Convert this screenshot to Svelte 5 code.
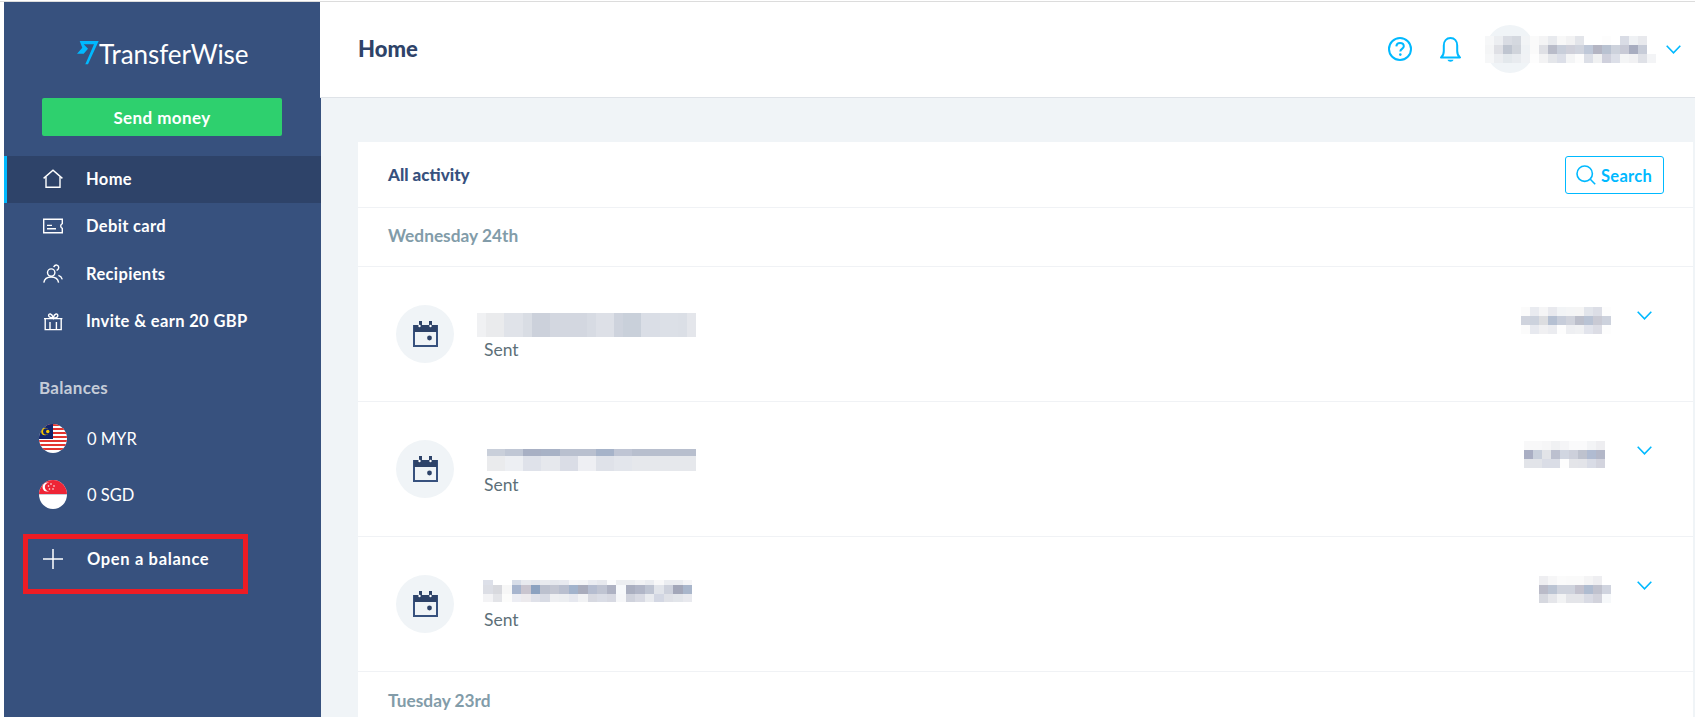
<script lang="ts">
  type PixRow = { h: number; cells: string[] };
  type Activity = { name: PixRow[]; nameW: number; nameTop: number; nameLeft: number; amount: PixRow[]; amountTop: number; amountRight: number; chevTop: number };

  const nav = [
    { label: 'Home', icon: 'home', active: true },
    { label: 'Debit card', icon: 'card', active: false },
    { label: 'Recipients', icon: 'people', active: false },
    { label: 'Invite & earn 20 GBP', icon: 'gift', active: false },
  ];

  // the blurred-out names and amounts, as cell colours
  const userPix: PixRow[] = [
    { h: 9, cells: ['f6f7f8', 'eceef1', 'd9dce3', 'd4d8df', 'f2f4f6', 'fafafa', 'f4f4f5', 'e8eaee', 'f8f8f8', 'f2f2f3', 'e3e5ea', 'ffffff', 'ffffff', 'fdfdfd', 'ffffff', 'd9dce5', 'eff1f4', 'e8e9ed', 'ffffff'] },
    { h: 9, cells: ['f4f5f6', 'dfe0e5', 'bfc5d0', 'd0d4db', 'eff2f5', 'fafafa', 'dfe0e5', 'b9bcc9', 'c8ceda', 'cfd0da', 'd0d4de', 'bfc8d8', 'b4b5c3', 'b9c2d1', 'cdd2dc', 'c8cad6', 'a8adc0', 'c7ccd8', 'ffffff'] },
    { h: 9, cells: ['f6f7f8', 'eceef1', 'e3e8ec', 'e8ebef', 'f0f2f5', 'fdfdfd', 'f3f3f4', 'e4e6ea', 'dcdfe8', 'f4f5f6', 'fcfcfc', 'dcdfe7', 'f0f1f2', 'cfd0dc', 'dcdfe8', 'f4f5f6', 'f1f1f3', 'dfe1e7', 'f3f4f6'] },
  ];

  const activities: Activity[] = [
    {
      name: [{ h: 24, cells: ['f0f1f3', 'eaebed', 'eaebed', 'e0e3e9', 'e0e3e9', 'd9dde4', 'ccd1db', 'ccd1db', 'd3d7e0', 'd3d7e0', 'd3d7e0', 'd3d7e0', 'd7dbe3', 'dde0e7', 'dde0e7', 'ced3dd', 'c9d0da', 'c9d0da', 'dadee6', 'dadee6', 'dce0e7', 'dce0e7', 'dbdfe6', 'e4e6eb'] }],
      nameW: 9.125, nameTop: 46, nameLeft: 0,
      amount: [
        { h: 9, cells: ['fbfbfb', 'e9ebf0', 'f5f5f6', 'e8e9ee', 'f2f4f6', 'f4f5f6', 'f5f5f5', 'e2e5eb', 'dcdee6', 'fdfdfd'] },
        { h: 9, cells: ['cfd3dd', 'ccd2dd', 'dcdde0', 'b5c0d2', 'c7cdda', 'd0d3dc', 'bcbfcb', 'b9c3d4', 'c9cad4', 'cdd2dd'] },
        { h: 9, cells: ['fbfbfb', 'e7e9ef', 'f0f0f2', 'ebecf0', 'fdfdfd', 'eeeff2', 'f0f1f3', 'e2e4ec', 'dcdde5', 'fdfdfd'] },
      ],
      amountTop: 40, amountRight: 0, chevTop: 44,
    },
    {
      name: [
        { h: 7, cells: ['c9cfda', 'c9cfda', 'c0c7d5', 'c0c7d5', 'a8b0c4', 'a8b0c4', 'a8b2c6', 'a8b2c6', 'b9c0cf', 'b9c0cf', 'b9c0cf', 'b9c0cf', 'a6b3c9', 'a6b3c9', 'bfc5d4', 'bfc5d4', 'b8bfce', 'b8bfce', 'b8bfce', 'b8bfce', 'b8bfce', 'b8bfce', 'b8bfce'] },
        { h: 15, cells: ['eaebed', 'eaebed', 'edeff3', 'edeff3', 'dfe2ea', 'dfe2ea', 'e6e8ed', 'e6e8ed', 'dadde6', 'dadde6', 'eeeff3', 'eeeff3', 'dfe2e9', 'dfe2e9', 'e3e6ec', 'e3e6ec', 'e6e8ec', 'e6e8ec', 'e6e8ec', 'e6e8ec', 'e6e8ec', 'e6e8ec', 'e6e8ec'] },
      ],
      nameW: 9.09, nameTop: 47, nameLeft: 10,
      amount: [
        { h: 9, cells: ['f8f8f9', 'f8f8f9', 'f6f6f7', 'f0f1f3', 'f5f5f7', 'fafafb', 'fafafb', 'f3f4f6', 'eeeef1'] },
        { h: 9, cells: ['a9aec3', 'c9d0dc', 'e2e4e8', 'bcc0cf', 'd1d6e1', 'cdd0db', 'bec2ce', 'b0bbd1', 'b3b7c8'] },
        { h: 9, cells: ['e2e4e9', 'e2e4e9', 'dadde6', 'dadde6', 'fdfdfd', 'e4e5e9', 'e3e4e9', 'd9dce6', 'd3d4de'] },
      ],
      amountTop: 39, amountRight: 6, chevTop: 44,
    },
    {
      name: [
        { h: 5, cells: ['dde0e9', 'ffffff', 'ffffff', 'd7dde8', 'e8eaef', 'e3e6ed', 'e9ebef', 'e6e8ee', 'e8eaf0', 'f6f6f8', 'f4f5f7', 'ebedf2', 'e7e9ee', 'fbfcfd', 'eceef1', 'eceef1', 'f2f3f5', 'ebedf1', 'f8f8f9', 'ebedf1', 'ebedf1', 'f5f5f7'] },
        { h: 9, cells: ['dcdee5', 'd8d9de', 'f7f7f7', 'a7b5ce', 'c9c5cf', '8ca2c0', 'bcc1ce', 'c3c6d2', 'b9bfcf', 'a2b3cc', 'a9acbc', 'b5bdd0', 'bfc4d2', 'aeb2c3', 'f7f9fb', 'aaafc0', 'b1b6c7', 'bec4d2', 'e1e4ea', 'cdd1dc', 'a3a7b9', 'a9b6cb'] },
        { h: 8, cells: ['f3f3f5', 'e3e4e8', 'fcfcfb', 'ecedf3', 'eceaed', 'dfe1e9', 'd8dbe4', 'eeeff2', 'eceef1', 'e6e8ef', 'f1f2f4', 'd7d9e1', 'dadde6', 'd7d9e2', 'f6f7f9', 'cfd2dc', 'd8dae3', 'e9ebef', 'd3d7e3', 'dfe1e7', 'e2e5ea', 'e8e9ee'] },
      ],
      nameW: 9.5, nameTop: 43, nameLeft: 6,
      amount: [
        { h: 9, cells: ['eeeef1', 'f6f6f7', 'fbfbfb', 'fafafa', 'fafafa', 'f4f4f5', 'eeeef1', 'ffffff'] },
        { h: 9, cells: ['babbc8', 'bbc4d3', 'cfd3dd', 'cfd3dd', 'c3c2ce', 'afbcd0', 'c0c2ce', 'd0d4df'] },
        { h: 9, cells: ['d6d8df', 'e5e6ea', 'f2f3f4', 'e4e5e9', 'e4e5e9', 'd9dbe4', 'd2d3dc', 'f6f8fa'] },
      ],
      amountTop: 39, amountRight: 0, chevTop: 44,
    },
  ];
</script>

{#snippet pix(rows: PixRow[], w = 9)}
  <div class="pix">
    {#each rows as row}
      <div class="pix-row" style="height: {row.h}px">
        {#each row.cells as c}
          <span style="background: #{c}; width: {w}px"></span>
        {/each}
      </div>
    {/each}
  </div>
{/snippet}

{#snippet chevron()}
  <svg class="chev" viewBox="0 0 15 9" width="15" height="9">
    <path d="M.7.7 7.5 7.8 14.3.7" fill="none" stroke="#00b9ff" stroke-width="1.6" />
  </svg>
{/snippet}

{#snippet navIcon(name: string)}
  <svg viewBox="0 0 20 20" width="20" height="20" fill="none" stroke="#fff" stroke-width="1.4">
    {#if name === 'home'}
      <path d="M.6 9.4 10 1.2l9.4 8.2" />
      <path d="M3 8v10.3h14V8" />
    {:else if name === 'card'}
      <path d="M.7 3.2h18.6v4.4a2.6 2.6 0 0 0 0 4.8v4.4H.7z" />
      <path d="M4 9.4h5M4 12.8h9" />
    {:else if name === 'people'}
      <circle cx="8.2" cy="8.6" r="3.7" />
      <path d="M.8 18.6c.6-3.6 3.5-5.6 7.4-5.6s6.8 2 7.4 5.6" />
      <path d="M10.6 3c1-1.5 2.3-2.2 3.4-1.8 1.7.5 2.2 2.6 1.1 4l-1.5 1.4" />
      <path d="M15.4 11.4c2 .6 3.3 2 3.9 4" />
    {:else}
      <path d="M1 7.6h18.4M2.2 7.6v11h16v-11M7 11v7.6M13.4 11v7.6" />
      <path d="M10.2 7C8.200 7 5.600 6.400 5.600 4.400S8.800 2 10.200 6.800C11.600 2 14.800 2.400 14.800 4.400S12.200 7 10.200 7z" />
    {/if}
  </svg>
{/snippet}

{#snippet calendar()}
  <svg viewBox="0 0 25 26" width="25" height="26">
    <path d="M1 5h23v20H1z" fill="none" stroke="#37517e" stroke-width="2" />
    <path d="M1 4h5V0h3v4h7V0h3v4h5v7H1z" fill="#2e4369" />
    <circle cx="6.500" cy="5" r="1.200" fill="#fff" />
    <circle cx="17.500" cy="5" r="1.200" fill="#fff" />
    <circle cx="16.500" cy="17" r="2.400" fill="#2e4369" />
  </svg>
{/snippet}

<div class="page">
  <div class="topline"></div>
  <div class="shell">
    <aside class="sidebar">
      <div class="logo">
        <svg class="mark" viewBox="0 0 22 24" width="22" height="24">
          <path d="M2.700 0H21.700L11 23.300H8.300L17 3.300H6.700L11 7.700 6.700 12.700H0L5.300 6.700z" fill="#00b9ff" />
        </svg>
        <span>TransferWise</span>
      </div>
      <button class="send">Send money</button>
      <nav>
        {#each nav as item}
          <div class="nav-item" class:active={item.active}>
            <span class="nav-ico">{@render navIcon(item.icon)}</span>
            <span>{item.label}</span>
          </div>
        {/each}
      </nav>
      <div class="bal-title">Balances</div>
      <div class="balance">
        <svg class="flag" viewBox="0 0 28 29" width="28" height="29">
          <rect width="28" height="29" fill="#fff" />
          <g fill="#e3342f">
            <rect y="0" width="28" height="2" />
            <rect x="14" y="4" width="14" height="2" />
            <rect x="14" y="8" width="14" height="2" />
            <rect x="14" y="12" width="14" height="2" />
            <rect y="16" width="28" height="2" />
            <rect y="20" width="28" height="2" />
            <rect y="24" width="28" height="2" />
          </g>
          <rect width="14" height="15" fill="#12256b" />
          <circle cx="6" cy="7.500" r="3.800" fill="#f7c600" />
          <circle cx="7.300" cy="7.500" r="3.200" fill="#12256b" />
          <circle cx="8.800" cy="7.500" r="1.700" fill="#f7c600" />
        </svg>
        <span>0 MYR</span>
      </div>
      <div class="balance sgd">
        <svg class="flag" viewBox="0 0 28 29" width="28" height="29">
          <rect width="28" height="29" fill="#fff" />
          <rect width="28" height="14" fill="#ee2536" />
          <rect y="14" width="28" height="1" fill="#c9cdd8" />
          <circle cx="8" cy="7" r="4.500" fill="#fff" />
          <circle cx="10" cy="7" r="4.200" fill="#ee2536" />
          <g fill="#fff">
            <circle cx="12" cy="4" r=".8" />
            <circle cx="15" cy="6" r=".8" />
            <circle cx="14" cy="9" r=".8" />
            <circle cx="10.500" cy="9" r=".8" />
            <circle cx="9.500" cy="6" r=".8" />
          </g>
        </svg>
        <span>0 SGD</span>
      </div>
      <div class="open">
        <svg viewBox="0 0 20 20" width="20" height="20">
          <path d="M10 0v20M0 10h20" stroke="#fff" stroke-width="1.500" />
        </svg>
        <span>Open a balance</span>
      </div>
    </aside>

    <div class="main">
      <header class="top">
        <h1>Home</h1>
        <div class="top-right">
          <svg viewBox="0 0 24 24" width="24" height="24" fill="none" stroke="#00b9ff">
            <circle cx="12" cy="12" r="11" stroke-width="2" />
            <path d="M8.300 9.400C8.500 7.200 10 6 12 6c2.300 0 3.800 1.400 3.800 3.300 0 2.600-3.500 2.600-3.500 5.100" stroke-width="2" />
            <circle cx="12.300" cy="17.600" r="1.300" fill="#00b9ff" stroke="none" />
          </svg>
          <svg class="bell" viewBox="0 0 21 25" width="21" height="25" fill="none" stroke="#00b9ff" stroke-width="2">
            <path d="M1 20.500c2-1.500 2.800-3.500 2.800-6.500V8.500C3.800 4 6.500 1 10.500 1s6.700 3 6.700 7.500V14c0 3 .8 5 2.800 6.500z" stroke-linejoin="round" />
            <path d="M7.500 22.800h6c-.3 1.300-1.500 2-3 2s-2.700-.7-3-2z" fill="#00b9ff" stroke="none" />
          </svg>
          <div class="user">
            <div class="avatar"></div>
            <div class="user-pix">{@render pix(userPix)}</div>
          </div>
          {@render chevron()}
        </div>
      </header>

      <section class="card">
        <div class="card-head">
          <strong>All activity</strong>
          <button class="search">
            <svg viewBox="0 0 20 20" width="20" height="20" fill="none" stroke="#00b9ff" stroke-width="1.600">
              <circle cx="8.700" cy="8.700" r="7.700" />
              <path d="m14.300 14.300 4.900 5" />
            </svg>
            <span>Search</span>
          </button>
        </div>
        <div class="date">Wednesday 24th</div>
        {#each activities as a}
          <div class="row">
            <div class="cal">{@render calendar()}</div>
            <div class="info">
              <div class="name" style="padding-top: {a.nameTop}px; padding-left: {a.nameLeft}px">{@render pix(a.name, a.nameW)}</div>
              <div class="sent">Sent</div>
            </div>
            <div class="amount" style="margin-top: {a.amountTop}px; margin-right: {a.amountRight}px">{@render pix(a.amount)}</div>
            <div class="row-chev" style="margin-top: {a.chevTop}px">{@render chevron()}</div>
          </div>
        {/each}
        <div class="date last">Tuesday 23rd</div>
      </section>
    </div>
  </div>
</div>

<style>
  :global(body) {
    margin: 0;
    background: #fff;
    overflow: hidden;
  }
  .page {
    height: 717px;
    overflow: hidden;
    font-family: Lato, "Liberation Sans", sans-serif;
  }
  .topline {
    height: 1px;
    margin-top: 1px;
    background: #dcdcdc;
  }
  .shell {
    display: flex;
    height: 715px;
    padding-left: 4px;
  }
  .sidebar {
    width: 317px;
    flex: none;
    background: #37517e;
    color: #fff;
  }
  .logo {
    display: flex;
    align-items: flex-end;
    height: 64px;
    padding-left: 73px;
    color: #fff;
    font-size: 26px;
    line-height: 25px;
  }
  .logo span {
    position: relative;
    top: 1px;
    letter-spacing: -0.05px;
  }
  .mark {
    margin-bottom: 1px;
  }
  .send {
    display: block;
    width: 240px;
    height: 38px;
    margin: 32px 0 0 38px;
    border: 0;
    border-radius: 2px;
    background: #2ed06e;
    color: #fff;
    font: 700 17px Lato, sans-serif;
    letter-spacing: 0.4px;
  }
  nav {
    margin-top: 20px;
  }
  .nav-item {
    display: flex;
    align-items: center;
    height: 47px;
    padding-left: 39px;
    font-size: 16.500px;
    font-weight: 700;
    letter-spacing: 0.35px;
    border-left: 3px solid transparent;
  }
  .nav-item:nth-child(-n + 2) {
    box-sizing: border-box;
    padding-bottom: 2px;
  }
  .nav-item.active {
    background: #2e4369;
    border-left-color: #00b9ff;
  }
  .nav-ico {
    display: flex;
    width: 43px;
    flex: none;
    margin-left: -3px;
  }
  .bal-title {
    margin: 34px 0 0 35px;
    font-size: 17px;
    font-weight: 700;
    line-height: 20px;
    color: #c5ccd8;
    letter-spacing: 0.3px;
  }
  .balance {
    display: flex;
    align-items: center;
    gap: 20px;
    height: 29px;
    margin: 26px 0 0 35px;
    font-size: 16.500px;
  }
  .balance.sgd {
    margin-top: 27px;
  }
  .flag {
    border-radius: 50%;
    flex: none;
  }
  .open {
    display: flex;
    align-items: center;
    gap: 24px;
    box-sizing: border-box;
    width: 225px;
    height: 60px;
    margin: 25px 0 0 19px;
    padding: 0 0 10px 15px;
    border: 5px solid #ed1c24;
    font-size: 16.500px;
    font-weight: 700;
    letter-spacing: 0.65px;
  }
  .main {
    flex: 1;
    min-width: 0;
    background: #f0f4f7;
  }
  .top {
    display: flex;
    align-items: center;
    justify-content: space-between;
    box-sizing: border-box;
    height: 96px;
    padding: 0 14px 2px 38px;
    background: #fff;
    border-bottom: 1px solid #dfe3e8;
    margin-left: -1px;
  }
  h1 {
    margin: 0;
    font-size: 22px;
    font-weight: 900;
    color: #2e4369;
  }
  .top-right {
    display: flex;
    align-items: center;
    padding-top: 1px;
  }
  .bell {
    margin-left: 28px;
  }
  .user {
    position: relative;
    width: 171px;
    height: 48px;
    margin: 0 10px 0 24px;
    display: flex;
    align-items: center;
  }
  .avatar {
    position: absolute;
    left: 1px;
    top: 0;
    width: 48px;
    height: 48px;
    border-radius: 50%;
    background: #f0f4f7;
  }
  .user-pix {
    position: relative;
    margin-top: 1px;
  }
  .pix-row {
    display: flex;
  }
  .pix-row span {
    flex: none;
  }
  .chev {
    display: block;
  }
  .card {
    width: 1335px;
    margin: 44px 0 0 37px;
    background: #fff;
  }
  .card-head {
    display: flex;
    align-items: center;
    justify-content: space-between;
    box-sizing: border-box;
    height: 66px;
    padding: 0 29px 0 30px;
    border-bottom: 1px solid #f0f2f5;
  }
  .card-head strong {
    font-size: 17px;
    font-weight: 900;
    color: #37517e;
  }
  .search {
    display: flex;
    align-items: center;
    gap: 5px;
    box-sizing: border-box;
    width: 99px;
    height: 38px;
    padding: 0 0 0 10px;
    border: 1px solid #00b9ff;
    border-radius: 3px;
    background: #fff;
    color: #00b9ff;
    font: 700 16.500px Lato, sans-serif;
    letter-spacing: 0.3px;
  }
  .search span {
    padding-top: 2px;
  }
  .date {
    box-sizing: border-box;
    height: 59px;
    padding: 18px 0 0 30px;
    font-size: 17.300px;
    font-weight: 700;
    line-height: 20px;
    color: #829ca9;
    border-bottom: 1px solid #f0f2f5;
  }
  .date.last {
    border-bottom: 0;
    padding-top: 19px;
  }
  .row {
    display: flex;
    box-sizing: border-box;
    height: 135px;
    padding: 0 41px 0 38px;
    border-bottom: 1px solid #f0f2f5;
  }
  .cal {
    display: flex;
    align-items: center;
    justify-content: center;
    flex: none;
    width: 58px;
    height: 58px;
    margin: 38px 23px 0 0;
    border-radius: 50%;
    background: #f0f4f7;
  }
  .info {
    flex: 1;
    min-width: 0;
  }
  .name {
    box-sizing: border-box;
    height: 71px;
  }
  .sent {
    padding-left: 7px;
    font-size: 17.500px;
    line-height: 24px;
    color: #5d7079;
  }
  .amount {
    flex: none;
  }
  .row-chev {
    margin-left: 26px;
    flex: none;
  }
</style>
